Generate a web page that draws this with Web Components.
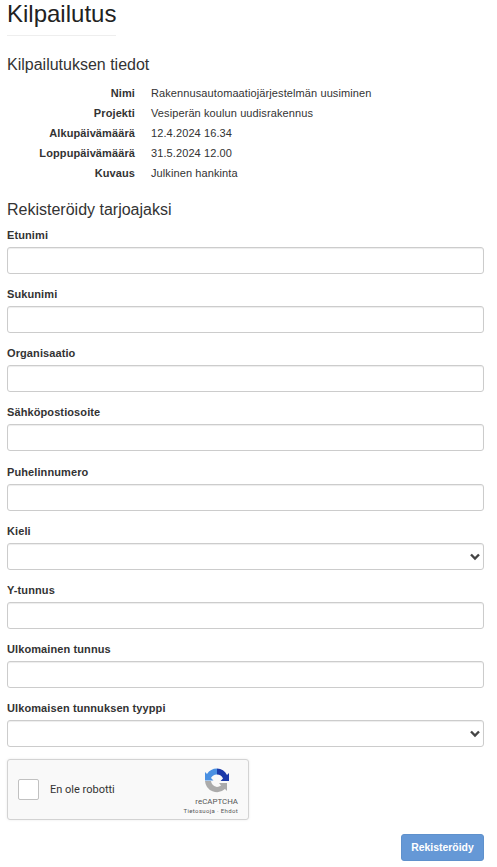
<!DOCTYPE html>
<html lang="fi">
<head>
<meta charset="utf-8">
<title>Kilpailutus</title>
<style>
html, body { margin: 0; background: #fff; }
body { font-family: "Liberation Sans", Arial, sans-serif; color: #333; }
</style>
</head>
<body>
<tender-page>
  <page-title>Kilpailutus</page-title>
  <section-title style="--top:19px;--bottom:8px">Kilpailutuksen tiedot</section-title>
  <info-list>
    <info-row label="Nimi">Rakennusautomaatiojärjestelmän uusiminen</info-row>
    <info-row label="Projekti">Vesiperän koulun uudisrakennus</info-row>
    <info-row label="Alkupäivämäärä">12.4.2024 16.34</info-row>
    <info-row label="Loppupäivämäärä">31.5.2024 12.00</info-row>
    <info-row label="Kuvaus">Julkinen hankinta</info-row>
  </info-list>
  <section-title style="--top:17px;--bottom:8px">Rekisteröidy tarjoajaksi</section-title>
  <form-field label="Etunimi"></form-field>
  <form-field label="Sukunimi"></form-field>
  <form-field label="Organisaatio"></form-field>
  <form-field label="Sähköpostiosoite"></form-field>
  <form-field label="Puhelinnumero"></form-field>
  <form-field label="Kieli" type="select"></form-field>
  <form-field label="Y-tunnus"></form-field>
  <form-field label="Ulkomainen tunnus"></form-field>
  <form-field label="Ulkomaisen tunnuksen tyyppi" type="select"></form-field>
  <captcha-box></captcha-box>
  <submit-bar>Rekisteröidy</submit-bar>
</tender-page>
<script>
class TenderPage extends HTMLElement {
  constructor() {
    super();
    this.attachShadow({mode: 'open'});
    this.shadowRoot.innerHTML = `<style>
      :host { display: block; box-sizing: border-box; width: 497px; padding: 0 13px 0 7px; font-size: 11px; color: #333; }
    </style><slot></slot>`;
  }
}
class PageTitle extends HTMLElement {
  constructor() {
    super();
    this.attachShadow({mode: 'open'});
    this.shadowRoot.innerHTML = `<style>
      :host { display: block; width: fit-content; padding: 0 0 7px; border-bottom: 1px solid #eee; font-size: 24px; line-height: 28px; color: #222; }
    </style><slot></slot>`;
  }
}
class SectionTitle extends HTMLElement {
  constructor() {
    super();
    this.attachShadow({mode: 'open'});
    this.shadowRoot.innerHTML = `<style>
      :host { display: block; margin: var(--top) 0 var(--bottom); font-size: 16px; line-height: 20px; color: #333; }
    </style><slot></slot>`;
  }
}
class InfoList extends HTMLElement {
  constructor() {
    super();
    this.attachShadow({mode: 'open'});
    this.shadowRoot.innerHTML = `<style>
      :host { display: grid; row-gap: 0; }
    </style><slot></slot>`;
  }
}
class InfoRow extends HTMLElement {
  constructor() {
    super();
    this.attachShadow({mode: 'open'});
    this.shadowRoot.innerHTML = `<style>
      :host { display: grid; grid-template-columns: 128px 1fr; column-gap: 16px; height: 20px; line-height: 20px; font-size: 11px; letter-spacing: .1px; }
      b { text-align: right; }
    </style><b></b><span><slot></slot></span>`;
    this.shadowRoot.querySelector('b').textContent = this.getAttribute('label');
  }
}
class FormField extends HTMLElement {
  constructor() {
    super();
    this.attachShadow({mode: 'open'});
    var isSelect = this.getAttribute('type') == 'select';
    this.shadowRoot.innerHTML = `<style>
      :host { display: block; margin-bottom: 13.15px; }
      label { display: block; height: 14px; line-height: 14px; margin-bottom: 5px; font-weight: bold; font-size: 11px; letter-spacing: .1px; }
      .box { position: relative; box-sizing: border-box; height: 27px; border: 1px solid #ccc; border-radius: 3px; background: #fff; box-shadow: inset 0 1px 1px rgba(0,0,0,.075); }
      svg { position: absolute; right: 2px; top: 9px; }
    </style><label></label><div class="box">${isSelect ? '<svg width="12" height="8" viewBox="0 0 12 8"><path d="M2 1.5 6 5.5 10 1.5" fill="none" stroke="#444" stroke-width="2.4"/></svg>' : ''}</div>`;
    this.shadowRoot.querySelector('label').textContent = this.getAttribute('label');
  }
}
class CaptchaBox extends HTMLElement {
  constructor() {
    super();
    this.attachShadow({mode: 'open'});
    this.shadowRoot.innerHTML = `<style>
      :host { display: flex; align-items: center; box-sizing: border-box; width: 242px; height: 61px; margin-top: -1px; padding: 0 10px 0 10px; border: 1px solid #d3d3d3; border-radius: 3px; background: #f9f9f9; box-shadow: 0 0 3px rgba(0,0,0,.08); font-family: Roboto, sans-serif; }
      .check { box-sizing: border-box; width: 21px; height: 21px; border: 1px solid #c1c1c1; border-radius: 2px; background: #fff; }
      .text { margin-left: 11px; flex: 1; font-size: 11px; color: #333; }
      .logo { display: flex; flex-direction: column; align-items: flex-end; color: #555; margin: 4px 0 0; }
      .logo svg { display: block; margin: 0 9px 4px 0; }
      .name { font-size: 7.9px; line-height: 9px; }
      .links { font-size: 6px; letter-spacing: .35px; line-height: 8px; margin-top: 1px; }
    </style>
    <div class="check"></div>
    <div class="text">En ole robotti</div>
    <div class="logo">
      <svg width="24" height="25" viewBox="0 0 24 25">
        <path d="M12 .5 A12 12 0 0 0 2 6 L0 4 V12.5 H8.5 L6 10 A6.5 6.5 0 0 1 12 6.5 Z" fill="#4a90e2"/>
        <path d="M12 .5 A12 12 0 0 1 22 7 L24 5 V13 H15.5 L18 10.5 A6.5 6.5 0 0 0 12 6.5 Z" fill="#1c3aa9"/>
        <path d="M0 13 H6 A6.5 6.5 0 0 0 12 19 A6.5 6.5 0 0 0 16 17.5 L14 15 H22 V23 L20 21 A12 12 0 0 1 0 13 Z" fill="#ababab"/>
      </svg>
      <div class="name">reCAPTCHA</div>
      <div class="links">Tietosuoja · Ehdot</div>
    </div>`;
  }
}
class SubmitBar extends HTMLElement {
  constructor() {
    super();
    this.attachShadow({mode: 'open'});
    this.shadowRoot.innerHTML = `<style>
      :host { display: flex; justify-content: flex-end; margin-top: 14px; }
      button { box-sizing: border-box; width: 83px; height: 27px; border: 1px solid #5f91cc; border-radius: 3px; background: #6598d6; color: #fff; font: bold 10.4px "Liberation Sans", Arial, sans-serif; padding: 0; }
    </style><button type="button"><slot></slot></button>`;
  }
}
customElements.define('tender-page', TenderPage);
customElements.define('page-title', PageTitle);
customElements.define('section-title', SectionTitle);
customElements.define('info-list', InfoList);
customElements.define('info-row', InfoRow);
customElements.define('form-field', FormField);
customElements.define('captcha-box', CaptchaBox);
customElements.define('submit-bar', SubmitBar);
</script>
</body>
</html>
